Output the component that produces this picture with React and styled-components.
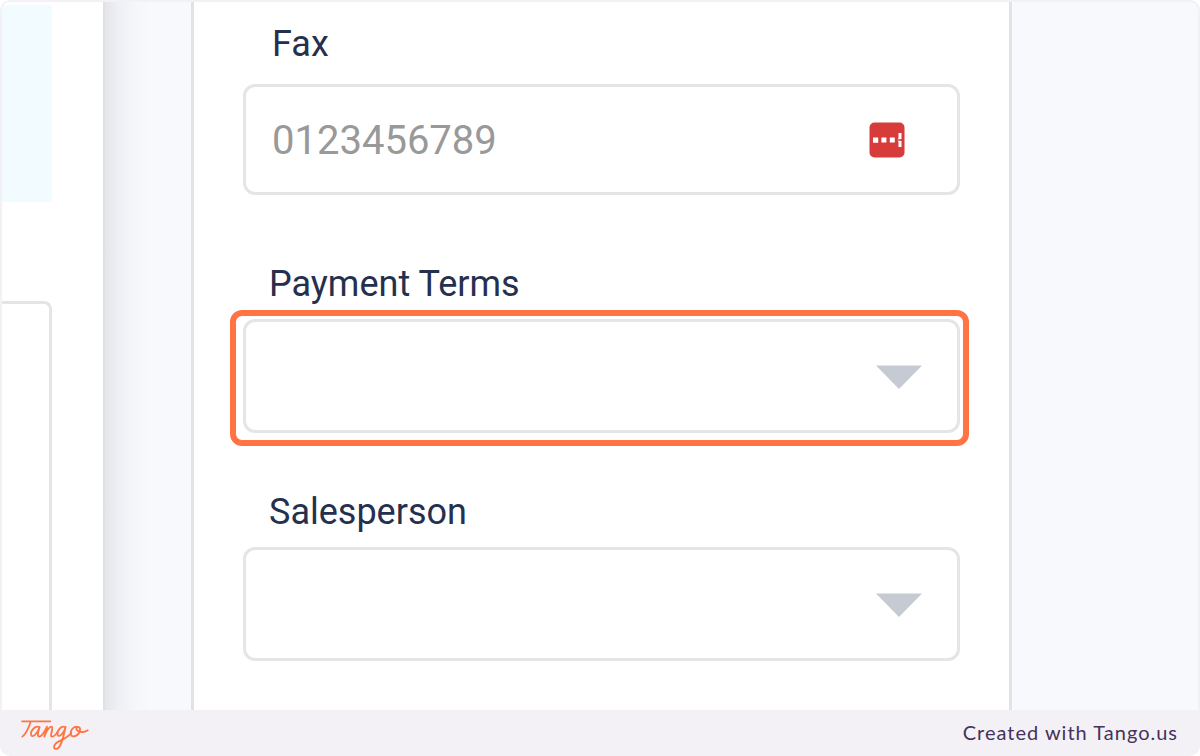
import React from "react";
import styled, { createGlobalStyle } from "styled-components";

const GlobalStyle = createGlobalStyle`
  *, *::before, *::after { box-sizing: border-box; }
  body { margin: 0; background: #fff; font-family: Roboto, sans-serif; }
`;

const Frame = styled.div`
  display: flex;
  flex-direction: column;
  min-height: 100vh;
  overflow: hidden;
  border-radius: 10px;
  background: #f3f1f6;
`;

const Stage = styled.main`
  display: grid;
  grid-template-columns: 103px 86px minmax(0, 821fr) minmax(0, 186fr);
  flex: 1;
  margin: 2px 2px 0;
  overflow: hidden;
  border-radius: 8px 8px 0 0;
  background: #f7f9fd;
`;

const Sidebar = styled.aside`
  display: flex;
  flex-direction: column;
  padding: 3px 51px 0 0;
  border-right: 2px solid #dfe0e2;
  background: #fff;
`;

const SidebarHighlight = styled.div`
  height: 197px;
  background: #f2fbff;
`;

const SidebarPanel = styled.div`
  flex: 1;
  margin-top: 99px;
  border: solid #e4e4e4;
  border-width: 3px 3px 0 0;
  border-top-right-radius: 8px;
`;

const Gutter = styled.div`
  background: linear-gradient(to right, #e4e6ea 0, #eef0f5 14px, #f4f6fa 28px, #f7f9fd 46px);
`;

const FormCard = styled.form`
  display: flex;
  flex-direction: column;
  padding: 20px 49px 48px;
  border: solid #e2e3e5;
  border-width: 0 3px;
  background: #fff;
`;

const Field = styled.div`
  display: flex;
  flex-direction: column;
  gap: ${(p) => (p.$select ? 13 : 18)}px;
  margin-top: ${(p) => p.$above || 0}px;
`;

const Label = styled.label`
  padding-left: ${(p) => (p.$select ? 26 : 29)}px;
  font-size: 36px;
  line-height: 44px;
  color: #25304f;
`;

const Control = styled.div`
  position: relative;
`;

const TextInput = styled.input`
  display: block;
  width: 100%;
  height: 111px;
  padding: 2px 100px 0 26px;
  border: 3px solid #e5e5e5;
  border-radius: 12px;
  outline: 0;
  background: #fff;
  font: 40px Roboto, sans-serif;
  color: #25304f;

  &::placeholder { color: #999; opacity: 1; }
`;

const Select = styled.select`
  display: block;
  width: 100%;
  height: 114px;
  padding: 0 100px 0 26px;
  border: 3px solid #e5e5e5;
  border-radius: 12px;
  outline: 0;
  appearance: none;
  background: #fff;
  font: 40px Roboto, sans-serif;
  color: #25304f;
`;

const FieldIcon = styled.svg`
  position: absolute;
  top: 1px;
  bottom: 0;
  right: ${(p) => p.$right}px;
  margin: auto 0;
  pointer-events: none;
`;

const FocusRing = styled.div`
  position: absolute;
  inset: -9px -9px -13px -13px;
  border: 6px solid #ff7442;
  border-radius: 12px;
  pointer-events: none;
`;

const Footer = styled.footer`
  display: flex;
  align-items: center;
  justify-content: space-between;
  height: 46px;
  padding: 0 22px 0 20px;
`;

const LogoLink = styled.a`
  display: flex;
  padding-top: 4px;
`;

const Credit = styled.span`
  padding-bottom: 2px;
  font: 20px/28px Lato, sans-serif;
  letter-spacing: 1px;
  color: #45325c;
`;

function TangoLogo() {
  return (
    <svg width="70" height="32" viewBox="60 88 210 96" fill="none" stroke="#ff7442" strokeWidth="5.4" strokeLinecap="round" strokeLinejoin="round" aria-hidden="true">
      <path d="M66 95H151M92 96C87 112 80 130 67 141" />
      <path d="M118 113C106 105 91 124 93 135C96 147 113 132 119 112C113 130 111 141 118 141C127 140 134 126 141 111L133 141C139 124 150 107 156 112C161 119 147 140 156 141C163 141 169 133 173 126" />
      <path d="M196 113C184 105 170 124 173 136C177 145 191 132 197 112C190 140 184 172 172 177C160 182 158 167 172 158C190 148 206 142 214 129" />
      <path d="M234 112C221 106 209 124 213 135C217 146 237 138 240 122C242 112 231 108 229 116C230 127 250 131 263 122" />
    </svg>
  );
}

function PasswordIcon() {
  return (
    <FieldIcon $right={55} width="36" height="36" viewBox="0 0 36 36" aria-hidden="true">
      <rect x="0.5" y="0.5" width="35" height="35" rx="5" fill="#d83c3a" />
      <path fill="#fff" d="M4 15.5h5.2v5.2H4zM12.4 15.5h5v5h-5zM20.8 15.5h5v5h-5z" />
      <path fill="#fff" d="M29.500 11h3v6l-1.200 1 1.200 1v6h-3v-5l-1.500-2 1.500-2z" />
      <path d="M28 18h5" stroke="#d83c3a" strokeWidth="1.400" />
    </FieldIcon>
  );
}

function SelectField({ id, label, above, highlighted }) {
  return (
    <Field $select $above={above}>
      <Label $select htmlFor={id}>{label}</Label>
      <Control>
        <Select id={id} defaultValue=""><option value="" /></Select>
        <FieldIcon $right={38} width="46" height="24" viewBox="0 0 46 24" aria-hidden="true">
          <path d="M0 0.500H46L23 24Z" fill="#c5cad3" />
        </FieldIcon>
        {highlighted && <FocusRing />}
      </Control>
    </Field>
  );
}

export default function App() {
  return (
    <>
      <GlobalStyle />
      <Frame>
        <Stage>
          <Sidebar>
            <SidebarHighlight />
            <SidebarPanel />
          </Sidebar>
          <Gutter />
          <FormCard>
            <Field>
              <Label htmlFor="fax">Fax</Label>
              <Control>
                <TextInput id="fax" type="tel" placeholder="0123456789" />
                <PasswordIcon />
              </Control>
            </Field>
            <SelectField id="terms" label="Payment Terms" above={67} highlighted />
            <SelectField id="salesperson" label="Salesperson" above={57} />
          </FormCard>
        </Stage>
        <Footer>
          <LogoLink href="#tango" aria-label="Tango"><TangoLogo /></LogoLink>
          <Credit>Created with Tango.us</Credit>
        </Footer>
      </Frame>
    </>
  );
}
